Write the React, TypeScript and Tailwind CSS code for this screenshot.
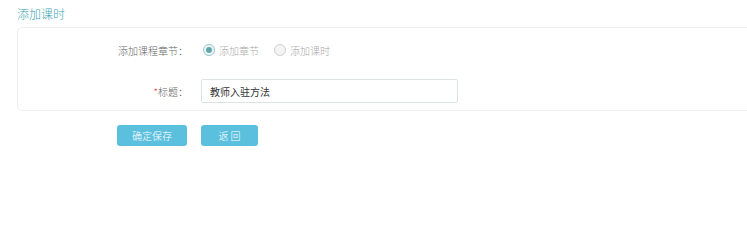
import React from "react";

function Radio({ checked, label }: { checked?: boolean; label: string }) {
  return (
    <label className="flex items-center gap-[4px] text-[10px] text-[#a8a8a8]">
      <span
        className={
          checked
            ? "flex h-[12px] w-[12px] items-center justify-center rounded-full border border-[#8fc9cf] bg-[#f4f4f4]"
            : "flex h-[12px] w-[12px] items-center justify-center rounded-full border border-[#cfcfcf] bg-[#f4f4f4]"
        }
      >
        {checked && <span className="h-[6px] w-[6px] rounded-full bg-[#5fa7ae]" />}
      </span>
      {label}
    </label>
  );
}

export default function App() {
  return (
    <div
      className="h-[224px] w-[747px] overflow-hidden bg-white font-light"
      style={{ fontFamily: '"Noto Sans CJK SC", "Noto Sans", sans-serif' }}
    >
      {/* 标题 */}
      <div className="flex h-[27px] items-center pl-[17px] text-[12px] text-[#3aa5b3]">添加课时</div>

      {/* 表单 */}
      <div className="ml-[17px] h-[84px] w-[760px] rounded-[5px] border border-[#efefef] pt-[10px]">
        <div className="flex h-[24px] items-center">
          <div className="w-[170px] text-right text-[10px] text-[#666]">添加课程章节：</div>
          <div className="ml-[15px] flex items-center gap-[15px]">
            <Radio checked label="添加章节" />
            <Radio label="添加课时" />
          </div>
        </div>
        <div className="mt-[17px] flex h-[24px] items-center">
          <div className="w-[170px] text-right text-[10px] text-[#666]">
            <span className="text-[#e4393c]">*</span>标题：
          </div>
          <input
            defaultValue="教师入驻方法"
            className="ml-[13px] h-[24px] w-[257px] rounded-[2px] border border-[#dde2e2] px-[8px] text-[10px] font-normal text-[#333] outline-none"
          />
        </div>
      </div>

      {/* 按钮 */}
      <div className="mt-[14px] flex gap-[14px] pl-[117px]">
        <button className="h-[21px] w-[70px] rounded-[3px] bg-[#5bc0de] text-[10px] text-white">确定保存</button>
        <button className="h-[21px] w-[57px] rounded-[3px] bg-[#5bc0de] text-[10px] text-white">返 回</button>
      </div>
    </div>
  );
}
